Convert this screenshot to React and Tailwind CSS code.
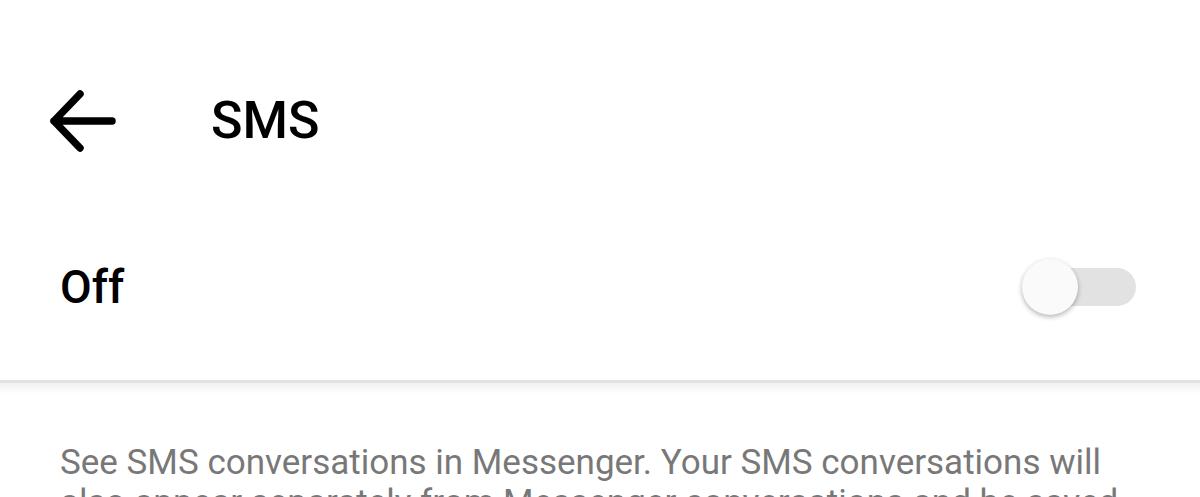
export default function App() {
  return (
    <div className="w-[1200px] h-[497px] overflow-hidden bg-white font-['Roboto',sans-serif]">
      <header className="flex items-center h-[242px] pl-[49px]">
        <svg width="70" height="64" viewBox="0 0 70 64" className="shrink-0">
          <path d="M5 32 H63 M5 32 L31 5 M5 32 L31 59" stroke="#000" strokeWidth="7.5" strokeLinecap="round" strokeLinejoin="round" fill="none" />
        </svg>
        <h1 className="ml-[92px] text-[52px] font-medium text-black leading-none">SMS</h1>
      </header>
      <div className="flex items-center justify-between h-[90px] pl-[60px] pr-[64px]">
        <span className="text-[46px] font-medium text-black leading-none">Off</span>
        <div className="relative flex items-center w-[114px] h-[58px]">
          <div className="ml-[18px] w-[96px] h-[38px] rounded-full bg-[#e2e2e2]" />
          <div className="absolute left-0 top-[1px] w-[56px] h-[56px] rounded-full bg-[#fafafa] shadow-[0_2px_5px_rgba(0,0,0,0.3)]" />
        </div>
      </div>
      <div className="h-[48px]" />
      <div className="h-[3px] bg-[#e3e3e3]" />
      <div className="h-[10px] bg-gradient-to-b from-[#f1f1f1] to-[#fdfdfd]" />
      <p className="pt-[50px] pl-[60px] pr-[60px] text-[35px] leading-[40px] text-[#787878]">
        See SMS conversations in Messenger. Your SMS conversations will also appear separately from Messenger conversations and be saved on your device.
      </p>
    </div>
  );
}
